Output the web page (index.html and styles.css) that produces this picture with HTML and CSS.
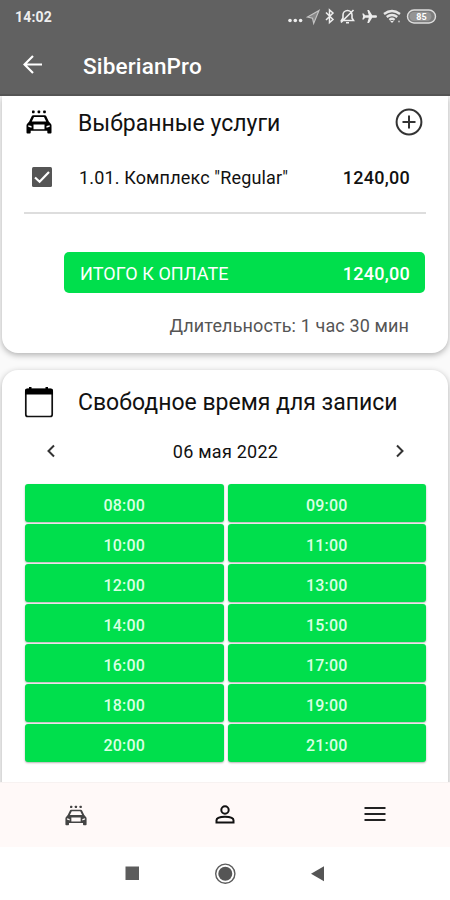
FILE: index.html
```html
<!DOCTYPE html>
<html lang="ru">
<head>
<meta charset="utf-8">
<title>SiberianPro</title>
<link rel="stylesheet" href="styles.css">
</head>
<body>
<svg class="defs" width="0" height="0">
  <symbol id="car" viewBox="0 0 26 24">
    <rect x="6" y=".6" width="2.600" height="2.600" rx=".6"/><rect x="11.600" y=".6" width="2.600" height="2.600" rx=".6"/><rect x="17.200" y=".6" width="2.600" height="2.600" rx=".6"/>
    <path fill-rule="evenodd" d="M7.200 5.200h11.600q1 0 1.400.9l2.600 5.400 2.200 2.600q.5.600.5 1.500v6.900q0 .9-.9.900h-2.400q-.9 0-.9-.9v-1.700H4.700v1.700q0 .9-.9.900H1.400q-.9 0-.9-.9v-6.900q0-.9.500-1.500l2.200-2.600 2.600-5.400q.4-.9 1.400-.9zM8 6.900l-2.200 4.600h14.400L18 6.900zM2.300 15.300v1.500l3.200 1v-1.700zM23.700 15.300v1.500l-3.200 1v-1.700zM7.500 14.500v4.700h11v-4.700z"/>
  </symbol>
</svg>
<header class="header">
  <div class="status">
    <span class="clock">14:02</span>
    <svg class="status-icons" width="152" height="20" viewBox="0 0 152 20">
      <g fill="#eee"><circle cx="3" cy="13.500" r="1.800"/><circle cx="8.300" cy="13.500" r="1.800"/><circle cx="13.600" cy="13.500" r="1.800"/></g>
      <path d="M32 3.500 20.500 10l5 1.200 1.200 5.200z" fill="#888" stroke="#c4c4c4" stroke-width="1.200"/>
      <path d="m39 5.500 7 7-3.500 3V3L46 6l-7 7" fill="none" stroke="#eee" stroke-width="1.500"/>
      <path d="M54.500 13.500h12l-1.500-2.500V8a4.500 4.500 0 0 0-9 0v3zM59 15.700h3M54 15.500 66.500 3" fill="none" stroke="#eee" stroke-width="1.600"/>
      <path d="M90 9.500q0-1.300-1.200-1.300h-3.600L82 3h-1.700l1.500 5.200h-3.700L76.700 6.500h-1.400l.8 3-.8 3h1.400l1.400-1.700h3.700L80.300 16H82l3.200-5.200h3.600q1.200 0 1.200-1.300z" fill="#eee"/>
      <g fill="none" stroke="#e6e6e6" stroke-width="2.300"><path d="M97 7q8-6 16 0M99.700 10q5.300-4 10.600 0M102.400 12.800q2.600-2 5.200 0"/></g>
      <path d="m103.200 14 1.800 2 1.800-2z" fill="#eee"/><circle cx="112" cy="14.500" r="1" fill="#bbb"/>
      <rect x="120.500" y="3" width="28" height="13" rx="6.500" fill="#7b7b7b" stroke="#ddd" stroke-width="1.400"/>
      <rect x="122.500" y="5" width="22" height="9" rx="4.500" fill="#949494"/>
      <text class="battery" x="134.500" y="13" text-anchor="middle">85</text>
    </svg>
  </div>
  <div class="appbar">
    <svg width="20" height="20" viewBox="0 0 20 20"><path d="M19 9.500H1.500M10 1 1.500 9.500 10 18" fill="none" stroke="#fff" stroke-width="2.200"/></svg>
    <h1 class="brand">SiberianPro</h1>
  </div>
</header>
<main class="content">
  <section class="card services">
    <div class="card-head">
      <svg class="head-icon" width="26" height="24"><use href="#car"/></svg>
      <h2 class="title services-title">Выбранные услуги</h2>
      <svg class="add" width="28" height="28" viewBox="0 0 28 28"><g fill="none" stroke="#333" stroke-width="2"><circle cx="14" cy="14" r="12.400"/><path d="M7.500 14h13M14 7.500v13"/></g></svg>
    </div>
    <div class="service">
      <svg width="20" height="20" viewBox="0 0 20 20"><rect width="20" height="20" rx="1.500" fill="#555"/><path d="m3 10.500 4.600 4.200L17 5" fill="none" stroke="#fff" stroke-width="2.200"/></svg>
      <span class="service-name">1.01. Комплекс "Regular"</span>
      <span class="price">1240,00</span>
    </div>
    <div class="total"><span class="total-label">ИТОГО К ОПЛАТЕ</span><span class="price">1240,00</span></div>
    <div class="duration">Длительность: 1 час 30 мин</div>
  </section>
  <section class="card booking">
    <div class="card-head">
      <svg class="head-icon" width="30" height="34" viewBox="0 0 30 34"><rect x="1.800" y="3.500" width="26.400" height="27" rx="2" fill="none" stroke="#111" stroke-width="1.700"/><path d="M1 8.500V4.500q0-2 2-2h2V1h2.500v1.500h14V1H24v1.500h3q2 0 2 2v4z"/></svg>
      <h2 class="title booking-title">Свободное время для записи</h2>
    </div>
    <div class="date-row">
      <svg width="10" height="14" viewBox="0 0 10 14"><path d="M8 1.500 2.500 7 8 12.500" fill="none" stroke="#333" stroke-width="2"/></svg>
      <span class="date">06 мая 2022</span>
      <svg width="10" height="14" viewBox="0 0 10 14"><path d="M2 1.500 7.500 7 2 12.500" fill="none" stroke="#333" stroke-width="2"/></svg>
    </div>
    <div class="slots">
      <button>08:00</button><button>09:00</button>
      <button>10:00</button><button>11:00</button>
      <button>12:00</button><button>13:00</button>
      <button>14:00</button><button>15:00</button>
      <button>16:00</button><button>17:00</button>
      <button>18:00</button><button>19:00</button>
      <button>20:00</button><button>21:00</button>
    </div>
  </section>
</main>
<nav class="tabs">
  <svg class="tab-car" width="22" height="21"><use href="#car"/></svg>
  <svg width="20" height="20" viewBox="0 0 20 20"><g fill="none" stroke="#111" stroke-width="2"><circle cx="10" cy="5" r="3.700"/><path d="M1.500 17.500v-2.200q0-3.600 8.500-3.600t8.500 3.600v2.200z"/></g></svg>
  <svg width="22" height="20" viewBox="0 0 22 20"><path d="M.5 3h21M.5 9h21M.5 15h21" stroke="#222" stroke-width="2"/></svg>
</nav>
<footer class="system">
  <svg width="22" height="22" viewBox="0 0 22 22"><rect x="4.500" y="3.500" width="13.500" height="13.500" fill="#5c5c5c"/></svg>
  <svg width="22" height="22" viewBox="0 0 22 22"><circle cx="11.300" cy="10.700" r="9.600" fill="none" stroke="#5c5c5c" stroke-width="1.400"/><circle cx="11.300" cy="10.700" r="7" fill="#555"/></svg>
  <svg width="22" height="22" viewBox="0 0 22 22"><path d="M4 10.700 17 3.300v15z" fill="#555"/></svg>
</footer>
</body>
</html>
```
FILE: styles.css
```css
* { box-sizing: border-box; }
body {
  margin: 0;
  width: 450px;
  height: 900px;
  overflow: hidden;
  display: flex;
  flex-direction: column;
  background: #fff;
  color: #111;
  font-family: Roboto, sans-serif;
}
svg { display: block; flex: none; }
.defs { position: absolute; }
h1, h2 { margin: 0; font-weight: 400; }
.header {
  height: 96px;
  flex: none;
  background: #616161;
  border-bottom: 2px solid #555;
  color: #fff;
  z-index: 1;
}
.status {
  height: 34px;
  padding: 0 14px 0 15px;
  display: flex;
  align-items: center;
  justify-content: space-between;
}
.clock { font-size: 14px; font-weight: 700; color: #eee; letter-spacing: .2px; }
.status-icons { margin-right: -3px; }
.battery { font-size: 9px; font-weight: 700; fill: #fff; }
.appbar { height: 62px; padding: 0 0 0 23px; display: flex; align-items: center; gap: 40px; }
.brand { font-size: 22.500px; font-weight: 500; line-height: 26px; letter-spacing: .15px; padding-top: 1px; }
.content {
  flex: 1;
  min-height: 0;
  overflow: hidden;
  padding: 0 2px;
  background: #fafafa;
}
.card { background: #fff; box-shadow: 0 2px 6px rgba(0, 0, 0, .3); }
.services { height: 257px; border-radius: 0 0 16px 16px; padding: 0 22px; }
.booking { height: 440px; margin-top: 17px; border-radius: 16px; padding: 0 22px; }
.card-head { display: flex; align-items: center; }
.services .card-head { height: 54px; padding-left: 2px; }
.services .head-icon { margin-top: -2px; }
.booking .card-head { height: 65px; }
.title { font-size: 23px; line-height: 28px; white-space: nowrap; }
.services-title { margin-left: 26px; padding-top: 1px; }
.booking-title { margin-left: 24px; padding-top: 1px; }
.add { margin-left: auto; margin-right: 3px; margin-top: -2px; }
.service {
  height: 64px;
  padding: 1px 16px 9px 8px;
  display: flex;
  align-items: center;
  border-bottom: 2px solid #ddd;
}
.service-name { margin-left: 27px; padding-top: 1px; font-size: 18px; white-space: nowrap; letter-spacing: .15px; }
.price { margin-left: auto; font-size: 18px; font-weight: 500; letter-spacing: .25px; }
.total {
  height: 41px;
  margin: 38px 1px 0 40px;
  padding: 2px 15px 0 16px;
  display: flex;
  align-items: center;
  background: #00df4c;
  color: #fff;
  border-radius: 5px;
}
.total-label { font-size: 18px; letter-spacing: .08px; }
.duration { margin: 22px 17px 0 0; text-align: right; font-size: 18px; line-height: 22px; color: #555; letter-spacing: .12px; }
.date-row { height: 32px; padding: 0 21px 0 22px; display: flex; align-items: center; justify-content: space-between; }
.date { font-size: 18px; letter-spacing: .25px; }
.slots { margin: 17px 0 0 1px; display: grid; grid-template-columns: 1fr 1fr; gap: 2px 4px; }
.slots button {
  height: 38px;
  border: 0;
  border-radius: 3px;
  padding: 4px 0 0;
  background: #00df4c;
  color: #d9ffe3;
  font: 500 16px Roboto, sans-serif;
  letter-spacing: .2px;
  box-shadow: 0 1px 2px rgba(0, 0, 0, .3);
}
.tabs {
  height: 65px;
  flex: none;
  display: grid;
  grid-template-columns: repeat(3, 1fr);
  place-items: center;
  padding-left: 1px;
  background: #fff9f8;
  border-top: 1px solid #f7f2f1;
}
.tab-car { fill: #444; }
.system { height: 53px; flex: none; display: flex; justify-content: center; align-items: center; gap: 71px; }
```
